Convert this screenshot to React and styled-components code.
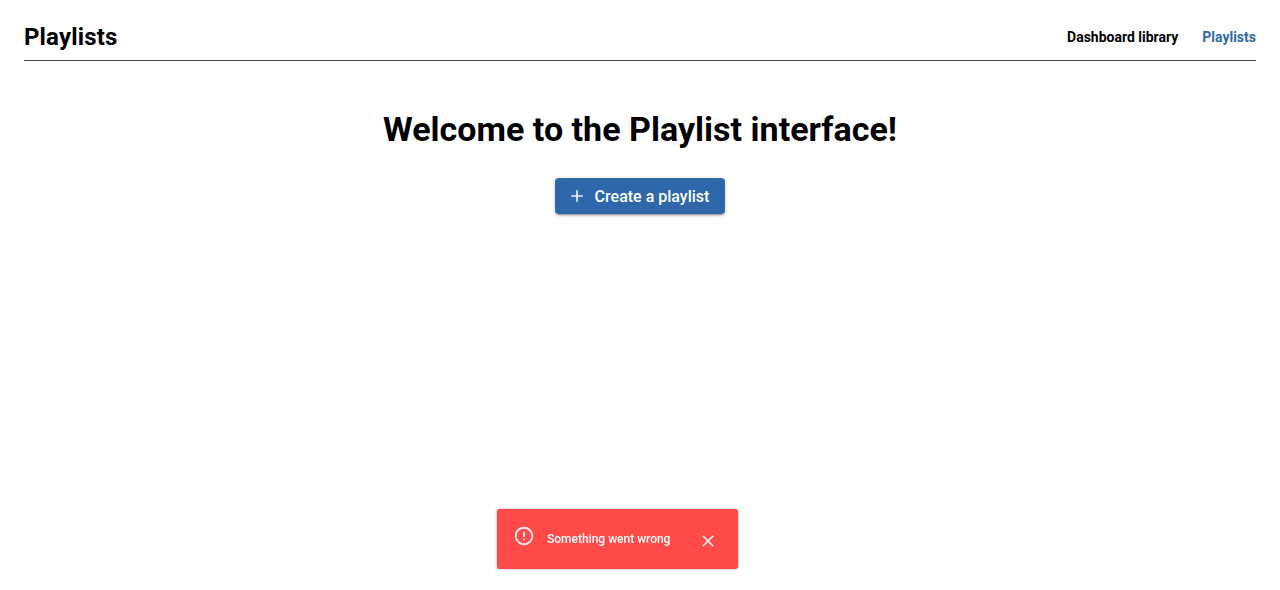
import React from 'react';
import styled, { createGlobalStyle } from 'styled-components';

const GlobalStyle = createGlobalStyle`
  *, *::before, *::after { box-sizing: border-box; }
  body {
    margin: 0;
    background: #fff;
    color: #000;
    font-family: Roboto, sans-serif;
    -webkit-font-smoothing: antialiased;
  }
`;

const Page = styled.main`
  display: flex;
  flex-direction: column;
  height: 590px;
  padding: 24px 24px 0;
`;

const Header = styled.header`
  display: flex;
  align-items: center;
  justify-content: space-between;
  height: 37px;
  padding-bottom: 10px;
  border-bottom: 1px solid #4a4a4a;
`;

const Title = styled.h1`
  margin: 0;
  font-size: 24px;
  font-weight: 700;
  line-height: 24px;
  letter-spacing: 0.15px;
`;

const Nav = styled.nav`
  display: flex;
  gap: 24px;
`;

const NavLink = styled.a`
  color: ${({ $active }) => ($active ? '#2e68aa' : '#000')};
  font-size: 14px;
  font-weight: 700;
  line-height: 20px;
  text-decoration: none;
`;

const Welcome = styled.section`
  display: flex;
  flex-direction: column;
  align-items: center;
  gap: 28px;
  padding-top: 48px;
`;

const Heading = styled.h2`
  margin: 0;
  font-size: 34px;
  font-weight: 700;
  line-height: 41px;
  letter-spacing: 0.015px;
`;

const CreateButton = styled.button`
  display: flex;
  align-items: center;
  gap: 8px;
  height: 36px;
  padding: 0 16px 0 12px;
  border: 0;
  border-radius: 4px;
  background: #2e68aa;
  box-shadow: 0 3px 1px -2px rgba(0, 0, 0, 0.2), 0 2px 2px rgba(0, 0, 0, 0.14), 0 1px 5px rgba(0, 0, 0, 0.12);
  color: #fff;
  font: 500 16px/24px Roboto, sans-serif;
`;

const ButtonLabel = styled.span`
  padding-top: 2px;
`;

const Icon = styled.svg`
  display: block;
  flex: none;
  width: ${({ $size }) => $size}px;
  height: ${({ $size }) => $size}px;
  fill: currentColor;
  opacity: 0.9;
`;

const Snackbar = styled.div`
  position: fixed;
  top: 509px;
  left: 497px;
  display: flex;
  align-items: center;
  width: 241px;
  height: 60px;
  padding: 0 20px 0 16px;
  border-radius: 3px;
  background: #ff4a4a;
  box-shadow: 0 0 2px rgba(0, 0, 0, 0.45);
  color: #fff;
`;

const AlertIcon = styled.span`
  margin: 0 12px 6px 0;
`;

const Message = styled.span`
  flex: 1;
  font-size: 12px;
  font-weight: 500;
  line-height: 18px;
`;

const CloseButton = styled.button`
  margin-top: 4px;
  padding: 0;
  border: 0;
  background: none;
  color: inherit;
`;

export default function App() {
  return (
    <>
      <GlobalStyle />
      <Page>
        <Header>
          <Title>Playlists</Title>
          <Nav>
            <NavLink>Dashboard library</NavLink>
            <NavLink $active>Playlists</NavLink>
          </Nav>
        </Header>
        <Welcome>
          <Heading>Welcome to the Playlist interface!</Heading>
          <CreateButton>
            <Icon $size={20} viewBox="0 0 24 24">
              <path d="M19 13h-6v6h-2v-6H5v-2h6V5h2v6h6v2z" />
            </Icon>
            <ButtonLabel>Create a playlist</ButtonLabel>
          </CreateButton>
        </Welcome>
      </Page>
      <Snackbar role="alert">
        <AlertIcon>
          <Icon $size={22} viewBox="0 0 24 24">
            <path d="M11 15h2v2h-2zm0-8h2v6h-2zm.99-5C6.47 2 2 6.48 2 12s4.47 10 9.99 10C17.52 22 22 17.52 22 12S17.52 2 11.99 2zM12 20c-4.42 0-8-3.58-8-8s3.58-8 8-8 8 3.58 8 8-3.58 8-8 8z" />
          </Icon>
        </AlertIcon>
        <Message>Something went wrong</Message>
        <CloseButton aria-label="Close">
          <Icon $size={20} viewBox="0 0 24 24">
            <path d="M19 6.41L17.59 5 12 10.59 6.41 5 5 6.41 10.59 12 5 17.59 6.41 19 12 13.41 17.59 19 19 17.59 13.41 12z" />
          </Icon>
        </CloseButton>
      </Snackbar>
    </>
  );
}
